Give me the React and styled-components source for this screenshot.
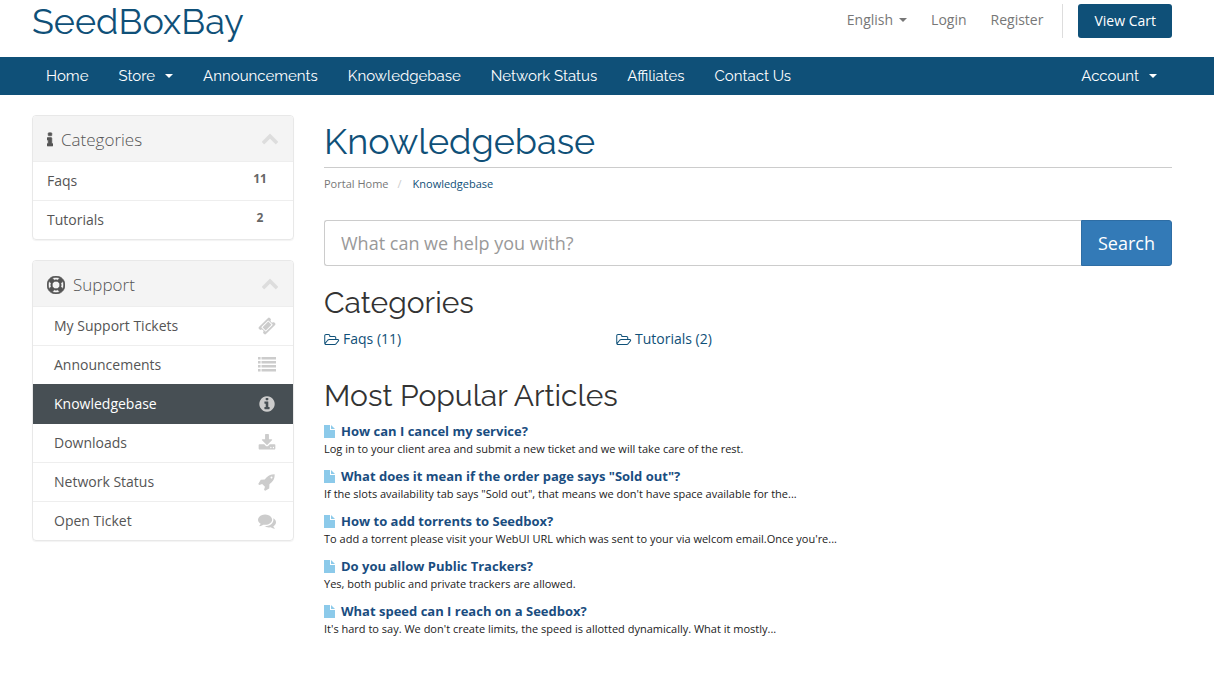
import React from "react"
import styled, { createGlobalStyle } from "styled-components"

const BRAND = "#0f5078"
const LINK = "#1a4d80"
const BODY_FONT = `"Open Sans", "Noto Sans", sans-serif`
const HEADING_FONT = `Raleway, Inter, "Open Sans", sans-serif`

const GlobalStyle = createGlobalStyle`
  *, *::before, *::after {
    box-sizing: border-box;
  }
  body {
    margin: 0;
    background: #fff;
    color: #333;
    font-family: ${BODY_FONT};
    font-size: 14px;
    line-height: 20px;
  }
  a {
    color: inherit;
    text-decoration: none;
  }
  h1, h2, h3, p, ul, ol {
    margin: 0;
    padding: 0;
    font-weight: 400;
  }
  ul, ol {
    list-style: none;
  }
`

const Header = styled.header`
  display: flex;
  justify-content: space-between;
  height: 57px;
  padding: 0 42px 0 32px;
`
const Logo = styled.a`
  color: ${BRAND};
  font-family: ${HEADING_FONT};
  font-size: 36px;
  font-weight: 400;
  line-height: 43px;
`
const TopNav = styled.div`
  display: flex;
  align-items: flex-start;
  padding-top: 4px;
  color: #777;
`
const TopLink = styled.a`
  display: flex;
  align-items: center;
  gap: 6px;
  margin-right: ${({ $last }) => ($last ? 19 : 24)}px;
  line-height: 32px;
`
const Caret = styled.span`
  border-top: 4px solid;
  border-left: 4px solid transparent;
  border-right: 4px solid transparent;
`
const CartArea = styled.div`
  padding-left: 15px;
  border-left: 1px solid #ddd;
`
const CartButton = styled.button`
  height: 34px;
  padding: 0 16px;
  border: 0;
  border-radius: 3px;
  background: ${BRAND};
  color: #fff;
  font: 400 14px/20px ${BODY_FONT};
`
const NavBar = styled.nav`
  display: flex;
  justify-content: space-between;
  padding: 0 42px 0 31px;
  background: ${BRAND};
  color: #fff;
  font-family: ${HEADING_FONT};
  font-size: 15px;
  line-height: 38px;
`
const NavList = styled.ul`
  display: flex;
`
const NavLink = styled.a`
  display: flex;
  align-items: center;
  gap: 10px;
  padding: 0 15px;
`
const Page = styled.div`
  display: grid;
  grid-template-columns: 262px minmax(0, 1fr);
  gap: 30px;
  padding: 20px 42px 40px 32px;
`
const Sidebar = styled.aside`
  display: flex;
  flex-direction: column;
  gap: 20px;
`
const Panel = styled.section`
  border: 1px solid #e8e8e8;
  border-radius: 4px;
  box-shadow: 0 1px 1px rgba(0, 0, 0, 0.05);
  overflow: hidden;
`
const PanelHeading = styled.header`
  display: flex;
  align-items: center;
  height: 45px;
  padding: 2px 14px 0;
  background: #f4f4f4;
  color: #555;
`
const PanelTitle = styled.h3`
  flex: 1;
  margin-left: 8px;
  font-size: 17px;
  font-weight: 300;
`
const PanelChevron = styled.span`
  display: flex;
  padding-bottom: 3px;
  color: #ddd;
`
const PanelItem = styled.a`
  display: flex;
  align-items: center;
  justify-content: space-between;
  height: 39px;
  padding: 0 17px 0 ${({ $indent }) => ($indent ? 21 : 14)}px;
  border-top: 1px solid #eee;
  color: #555;
  svg {
    color: #ccc;
  }
  &[aria-current="page"] {
    border-top-color: #474f54;
    background: #474f54;
    color: #fff;
  }
  &[aria-current="page"] + a {
    border-top-color: #474f54;
  }
`
const Count = styled.span`
  width: 32px;
  padding-bottom: 4px;
  color: #666;
  font-size: 12px;
  font-weight: 700;
  text-align: center;
`
const PageTitle = styled.h1`
  padding: 5px 0 4px;
  border-bottom: 1px solid #ccc;
  color: ${BRAND};
  font-family: ${HEADING_FONT};
  font-size: 36px;
  line-height: 43px;
`
const Breadcrumb = styled.ol`
  display: flex;
  padding-top: 8px;
  color: #777;
  font-size: 11px;
  line-height: 16px;
  li + li {
    color: ${BRAND};
  }
  li + li::before {
    content: "/";
    padding: 0 11px 0 9px;
    color: #ccc;
  }
`
const SearchForm = styled.form`
  display: flex;
  height: 46px;
  margin: 28px 0 19px;
`
const SearchInput = styled.input`
  flex: 1;
  min-width: 0;
  padding: 0 16px;
  border: 1px solid #ccc;
  border-right: 0;
  border-radius: 3px 0 0 3px;
  color: #555;
  font: 400 18px/24px ${BODY_FONT};
  &::placeholder {
    color: #999;
    opacity: 1;
  }
`
const SearchButton = styled.button`
  padding: 0 16px;
  border: 1px solid #2e6da4;
  border-radius: 0 3px 3px 0;
  background: #337ab7;
  color: #fff;
  font: 400 18px/24px ${BODY_FONT};
`
const SectionTitle = styled.h2`
  color: #333;
  font-family: ${HEADING_FONT};
  font-size: 30px;
  line-height: 36px;
`
const CategoryGrid = styled.div`
  display: grid;
  grid-template-columns: repeat(3, 292px);
  padding: 8px 0 29px;
  color: ${BRAND};
  a {
    display: flex;
    align-items: center;
    gap: 3px;
  }
`
const ArticleList = styled.ul`
  display: flex;
  flex-direction: column;
  gap: 9px;
  padding-top: 7px;
`
const ArticleLink = styled.a`
  display: flex;
  align-items: center;
  gap: 6px;
  color: ${LINK};
  font-size: 13px;
  font-weight: 700;
  line-height: 20px;
`
const Excerpt = styled.p`
  color: #222;
  font-size: 11px;
  line-height: 16px;
`

// Glyphs on the 1792 unit grid, [viewBox width, path]
const GLYPHS = {
  info: [
    640,
    "M640 1344v128q0 26-19 45t-45 19h-512q-26 0-45-19t-19-45v-128q0-26 19-45t45-19h64v-384h-64q-26 0-45-19t-19-45v-128q0-26 19-45t45-19h384q26 0 45 19t19 45v576h64q26 0 45 19t19 45zm-128-1152v192q0 26-19 45t-45 19h-256q-26 0-45-19t-19-45v-192q0-26 19-45t45-19h256q26 0 45 19t19 45z",
  ],
  lifeRing: [
    1792,
    "M896 0q182 0 348 71t286 191 191 286 71 348-71 348-191 286-286 191-348 71-348-71-286-191-191-286-71-348 71-348 191-286 286-191 348-71zm0 128q-190 0-361 90l194 194q82-28 167-28t167 28l194-194q-171-90-361-90zm-678 1129l194-194q-28-82-28-167t28-167l-194-194q-90 171-90 361t90 361zm678 407q190 0 361-90l-194-194q-82 28-167 28t-167-28l-194 194q171 90 361 90zm0-384q159 0 271.5-112.5t112.5-271.5-112.5-271.5-271.5-112.5-271.5 112.5-112.5 271.5 112.5 271.5 271.5 112.5zm484-217l194 194q90-171 90-361t-90-361l-194 194q28 82 28 167t-28 167z",
  ],
  chevronUp: [
    1792,
    "M1683 1331l-166 165q-19 19-45 19t-45-19l-531-531-531 531q-19 19-45 19t-45-19l-166-165q-19-19-19-45.5t19-45.5l742-741q19-19 45-19t45 19l742 741q19 19 19 45.5t-19 45.5z",
  ],
  ticket: [
    1792,
    "M1024 452l316 316-572 572-316-316zm-211 979l618-618q19-19 19-45t-19-45l-362-362q-18-18-45-18t-45 18l-618 618q-19 19-19 45t19 45l362 362q18 18 45 18t45-18zm889-637l-907 908q-37 37-90.5 37t-90.5-37l-126-126q56-56 56-136t-56-136-136-56-136 56l-125-126q-37-37-37-90.5t37-90.5l907-906q37-37 90.5-37t90.5 37l125 125q-56 56-56 136t56 136 136 56 136-56l126 125q37 37 37 90.5t-37 90.5z",
  ],
  list: [
    1792,
    "M0 100h256v240h-256zM0 500h256v240h-256zM0 900h256v240h-256zM0 1300h256v240h-256zM350 100h1442v240h-1442zM350 500h1442v240h-1442zM350 900h1442v240h-1442zM350 1300h1442v240h-1442z",
  ],
  infoCircle: [
    1792,
    "M1152 1376v-160q0-14-9-23t-23-9h-96v-512q0-14-9-23t-23-9h-320q-14 0-23 9t-9 23v160q0 14 9 23t23 9h96v320h-96q-14 0-23 9t-9 23v160q0 14 9 23t23 9h448q14 0 23-9t9-23zm-128-896v-160q0-14-9-23t-23-9h-192q-14 0-23 9t-9 23v160q0 14 9 23t23 9h192q14 0 23-9t9-23zm640 416q0 209-103 385.5t-279.5 279.5-385.5 103-385.5-103-279.5-279.5-103-385.5 103-385.5 279.5-279.5 385.5-103 385.5 103 279.5 279.5 103 385.5z",
  ],
  download: [
    1792,
    "M1344 1344q0-26-19-45t-45-19-45 19-19 45 19 45 45 19 45-19 19-45zm256 0q0-26-19-45t-45-19-45 19-19 45 19 45 45 19 45-19 19-45zm128-224v320q0 40-28 68t-68 28h-1472q-40 0-68-28t-28-68v-320q0-40 28-68t68-28h465l135 136q58 56 136 56t136-56l136-136h464q40 0 68 28t28 68zm-325-569q17 41-14 70l-448 448q-18 19-45 19t-45-19l-448-448q-31-29-14-70 17-39 59-39h256v-448q0-26 19-45t45-19h256q26 0 45 19t19 45v448h256q42 0 59 39z",
  ],
  rocket: [
    1792,
    "M1440 448q0-40-28-68t-68-28-68 28-28 68 28 68 68 28 68-28 28-68zm224-288q0 249-75.5 430.5t-253.5 360.5q-81 80-195 176l-20 379q-2 16-16 26l-384 224q-7 4-16 4-12 0-23-9l-64-64q-13-14-8-32l85-276-281-281-276 85q-3 1-9 1-14 0-23-9l-64-64q-17-19-5-39l224-384q10-14 26-16l379-20q96-114 176-195 188-187 358-258t431-71q14 0 24 9.5t10 22.5z",
  ],
  comments: [
    1792,
    "M1408 768q0 139-94 257t-256.5 186.5-353.5 68.5q-86 0-176-16-124 88-278 128-36 9-86 16h-3q-11 0-20.5-8t-11.5-21q-1-3-1-6.5t.5-6.5 2-6l2.5-5 3.5-5.5 4-5 4.5-5 4-4.5q5-6 23-25t26-29.5 22.5-29 25-38.5 20.5-44q-124-72-195-177t-71-224q0-139 94-257t256.5-186.5 353.5-68.5 353.5 68.5 256.5 186.5 94 257zm384 256q0 120-71 224.5t-195 176.5q10 24 20.5 44t25 38.5 22.5 29 26 29.5 23 25q1 1 4 4.5t4.5 5 4 5 3.5 5.5l2.5 5 2 6 .5 6.5-1 6.5q-3 14-13 22t-22 7q-50-7-86-16-154-40-278-128-90 16-176 16-271 0-472-132 58 4 88 4 161 0 309-45t264-129q125-92 192-212t67-254q0-77-23-152 129 71 204 178t75 230z",
  ],
  folderOpen: [
    1984,
    "M1781 1056q0-35-53-35h-1088q-40 0-85.5 21.5t-71.5 52.5l-294 363q-18 24-18 40 0 35 53 35h1088q40 0 86-22t71-53l294-363q18-22 18-39zm-1141-163h768v-160q0-40-28-68t-68-28h-576q-40 0-68-28t-28-68v-64q0-40-28-68t-68-28h-320q-40 0-68 28t-28 68v853l256-315q44-53 116-87.5t140-34.5zm1269 163q0 62-46 120l-295 363q-43 53-116 87.5t-140 34.5h-1088q-92 0-158-66t-66-158v-960q0-92 66-158t158-66h320q92 0 158 66t66 158v32h544q92 0 158 66t66 158v160h192q54 0 99 24.5t67 70.5q15 32 15 68z",
  ],
}

const Icon = ({ name, size = 18, stroke = 0 }) => {
  const [width, path] = GLYPHS[name]
  return (
    <svg
      width={Math.round((size * width) / 1792)}
      height={size}
      viewBox={`0 0 ${width} 1792`}
      fill="currentColor"
      stroke={stroke ? "currentColor" : "none"}
      strokeWidth={stroke}
      aria-hidden="true"
    >
      <path d={path} />
    </svg>
  )
}

const FileIcon = () => (
  <svg width="11" height="14" viewBox="0 0 11 14" fill="#8ccaea" aria-hidden="true">
    <path d="M0 1h6v5h5v8h-11zM7 1l4 4h-4z" />
  </svg>
)

const navItems = [
  "Home",
  "Store",
  "Announcements",
  "Knowledgebase",
  "Network Status",
  "Affiliates",
  "Contact Us",
]

const categories = [
  { name: "Faqs", count: 11 },
  { name: "Tutorials", count: 2 },
]

const supportLinks = [
  { name: "My Support Tickets", icon: "ticket" },
  { name: "Announcements", icon: "list" },
  { name: "Knowledgebase", icon: "infoCircle", active: true },
  { name: "Downloads", icon: "download" },
  { name: "Network Status", icon: "rocket" },
  { name: "Open Ticket", icon: "comments" },
]

const articles = [
  {
    title: "How can I cancel my service?",
    excerpt:
      "Log in to your client area and submit a new ticket and we will take care of the rest.",
  },
  {
    title: 'What does it mean if the order page says "Sold out"?',
    excerpt:
      'If the slots availability tab says "Sold out", that means we don\'t have space available for the...',
  },
  {
    title: "How to add torrents to Seedbox?",
    excerpt:
      "To add a torrent please visit your WebUI URL which was sent to your via welcom email.Once you're...",
  },
  {
    title: "Do you allow Public Trackers?",
    excerpt: "Yes, both public and private trackers are allowed.",
  },
  {
    title: "What speed can I reach on a Seedbox?",
    excerpt:
      "It's hard to say. We don't create limits, the speed is allotted dynamically. What it mostly...",
  },
]

const SidebarPanel = ({ title, icon, children }) => (
  <Panel>
    <PanelHeading>
      <Icon name={icon} stroke={70} />
      <PanelTitle>{title}</PanelTitle>
      <PanelChevron>
        <Icon name="chevronUp" />
      </PanelChevron>
    </PanelHeading>
    {children}
  </Panel>
)

const App = () => {
  return (
    <>
      <GlobalStyle />
      <Header>
        <Logo href="#">SeedBoxBay</Logo>
        <TopNav>
          <TopLink href="#">
            English <Caret />
          </TopLink>
          <TopLink href="#">Login</TopLink>
          <TopLink href="#" $last>
            Register
          </TopLink>
          <CartArea>
            <CartButton type="button">View Cart</CartButton>
          </CartArea>
        </TopNav>
      </Header>
      <NavBar>
        <NavList>
          {navItems.map(item => (
            <li key={item}>
              <NavLink href="#">
                {item}
                {item === "Store" && <Caret />}
              </NavLink>
            </li>
          ))}
        </NavList>
        <NavLink href="#">
          Account <Caret />
        </NavLink>
      </NavBar>
      <Page>
        <Sidebar>
          <SidebarPanel title="Categories" icon="info">
            {categories.map(({ name, count }) => (
              <PanelItem key={name} href="#">
                {name}
                <Count>{count}</Count>
              </PanelItem>
            ))}
          </SidebarPanel>
          <SidebarPanel title="Support" icon="lifeRing">
            {supportLinks.map(({ name, icon, active }) => (
              <PanelItem
                key={name}
                href="#"
                $indent
                aria-current={active ? "page" : undefined}
              >
                {name}
                <Icon name={icon} />
              </PanelItem>
            ))}
          </SidebarPanel>
        </Sidebar>
        <main>
          <PageTitle>Knowledgebase</PageTitle>
          <Breadcrumb>
            <li>
              <a href="#">Portal Home</a>
            </li>
            <li>Knowledgebase</li>
          </Breadcrumb>
          <SearchForm>
            <SearchInput
              type="text"
              aria-label="Search the knowledgebase"
              placeholder="What can we help you with?"
            />
            <SearchButton type="button">Search</SearchButton>
          </SearchForm>
          <SectionTitle>Categories</SectionTitle>
          <CategoryGrid>
            {categories.map(({ name, count }) => (
              <a key={name} href="#">
                <Icon name="folderOpen" size={14} />
                {name} ({count})
              </a>
            ))}
          </CategoryGrid>
          <SectionTitle>Most Popular Articles</SectionTitle>
          <ArticleList>
            {articles.map(({ title, excerpt }) => (
              <li key={title}>
                <ArticleLink href="#">
                  <FileIcon />
                  {title}
                </ArticleLink>
                <Excerpt>{excerpt}</Excerpt>
              </li>
            ))}
          </ArticleList>
        </main>
      </Page>
    </>
  )
}

export default App
